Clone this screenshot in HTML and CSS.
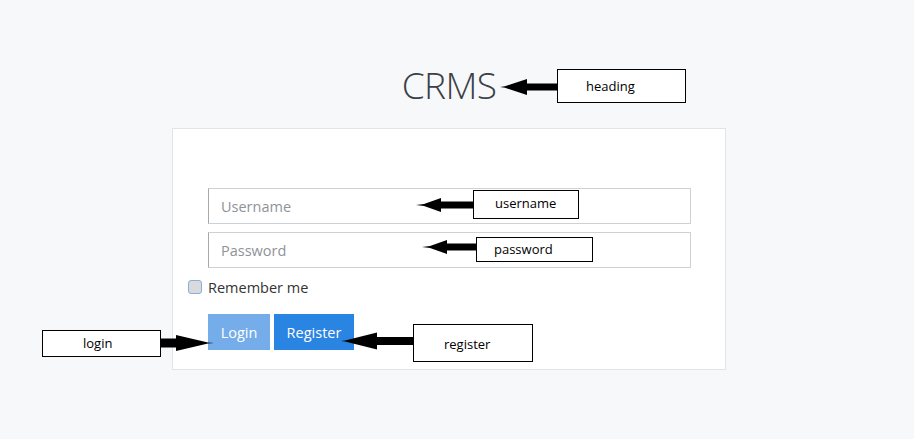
FILE: index.html
```html
<!DOCTYPE html>
<html lang="en">
<head>
<meta charset="utf-8">
<title>CRMS</title>
<link rel="stylesheet" href="styles.css">
</head>
<body>
<div class="page">
  <h1 class="title">CRMS</h1>
  <form class="card">
    <input class="field" type="text" placeholder="Username">
    <input class="field" type="password" placeholder="Password">
    <label class="remember"><span class="check"></span><span>Remember me</span></label>
    <div class="actions">
      <button type="button" class="btn btn-login">Login</button>
      <button type="button" class="btn btn-register">Register</button>
    </div>
  </form>

  <div class="note note-heading">heading</div>
  <svg class="arrow arrow-heading" viewBox="0 0 58 18"><polygon points="0,9 5,8.2 27,1 27,5.5 58,5.5 58,12.5 27,12.5 27,17 5,9.8"/></svg>

  <div class="note note-user">username</div>
  <svg class="arrow arrow-user" viewBox="0 0 57 18"><polygon points="0,9 8,8 25,2 25,5.5 57,5.5 57,12.5 25,12.5 25,16 8,10"/></svg>

  <div class="note note-pass">password</div>
  <svg class="arrow arrow-pass" viewBox="0 0 55 18"><polygon points="0,9 8,8 25,2 25,5.5 55,5.5 55,12.5 25,12.5 25,16 8,10"/></svg>

  <div class="note note-login">login</div>
  <svg class="arrow arrow-login" viewBox="0 0 54 18"><polygon points="54,9 48,8.4 16,1 16,4.5 0,4.5 0,13.5 16,13.5 16,17 48,9.6"/></svg>

  <div class="note note-register">register</div>
  <svg class="arrow arrow-register" viewBox="0 0 73 18"><polygon points="0,9 4,8.4 36,0.5 36,5 73,5 73,13 36,13 36,17.5 4,9.6"/></svg>
</div>
</body>
</html>
```

FILE: styles.css
```css
html, body {
  margin: 0;
  padding: 0;
  background: #f7f8fa;
}
body {
  font-family: "Open Sans", "Noto Sans", sans-serif;
  color: #333;
}
.page {
  position: relative;
  width: 898px;
  height: 439px;
  display: flex;
  flex-direction: column;
  align-items: center;
}
.title {
  margin: 60px 0 0 0;
  height: 68px;
  font-weight: 300;
  font-size: 37px;
  line-height: 50px;
  color: #3b4047;
  letter-spacing: -0.6px;
}
.card {
  box-sizing: border-box;
  width: 554px;
  height: 242px;
  background: #fff;
  border: 1px solid #e2e4e8;
  padding: 59px 35px 0 35px;
  display: flex;
  flex-direction: column;
}
.field {
  box-sizing: border-box;
  width: 483px;
  height: 36px;
  margin: 0 0 8px 0;
  padding: 0 12px;
  border: 1px solid #cdd2d8;
  border-left-color: #a8a8a8;
  font-family: "Open Sans", "Noto Sans", sans-serif;
  font-size: 14.5px;
  color: #333;
  background: #fff;
  outline: none;
}
.field::placeholder {
  color: #8f9398;
}
.remember {
  display: flex;
  align-items: center;
  gap: 6px;
  margin: -4px 0 0 -20px;
  font-size: 14.5px;
  color: #333;
  height: 30px;
}
.check {
  box-sizing: border-box;
  width: 14px;
  height: 14px;
  border: 1.5px solid #86aee6;
  border-radius: 3px;
  background: #dadada;
}
.actions {
  display: flex;
  gap: 4px;
  margin-top: 12px;
}
.btn {
  height: 36px;
  border: none;
  color: #fff;
  font-family: "Open Sans", "Noto Sans", sans-serif;
  font-size: 14.5px;
  padding: 0;
}
.btn-login {
  width: 62px;
  background: #74ade9;
}
.btn-register {
  width: 80px;
  background: #2a84e2;
}

/* annotation overlay */
.note {
  position: absolute;
  box-sizing: border-box;
  background: #fff;
  border: 1px solid #000;
  font-family: "Open Sans", "Noto Sans", sans-serif;
  font-size: 13px;
  color: #000;
  line-height: 16px;
}
.arrow {
  position: absolute;
  height: 18px;
  fill: #000;
}
.note-heading { left: 557px; top: 69px; width: 129px; height: 34px; padding: 8px 0 0 28px; }
.arrow-heading { left: 500px; top: 78px; width: 58px; }
.note-user { left: 473px; top: 190px; width: 106px; height: 29px; padding: 4px 0 0 21px; }
.arrow-user { left: 416px; top: 196px; width: 57px; }
.note-pass { left: 476px; top: 237px; width: 117px; height: 25px; padding: 3px 0 0 17px; }
.arrow-pass { left: 422px; top: 238px; width: 55px; }
.note-login { left: 42px; top: 330px; width: 119px; height: 27px; padding: 4px 0 0 40px; }
.arrow-login { left: 160px; top: 334px; width: 54px; }
.note-register { left: 413px; top: 324px; width: 120px; height: 38px; padding: 11px 0 0 30px; }
.arrow-register { left: 341px; top: 332px; width: 73px; }
```
